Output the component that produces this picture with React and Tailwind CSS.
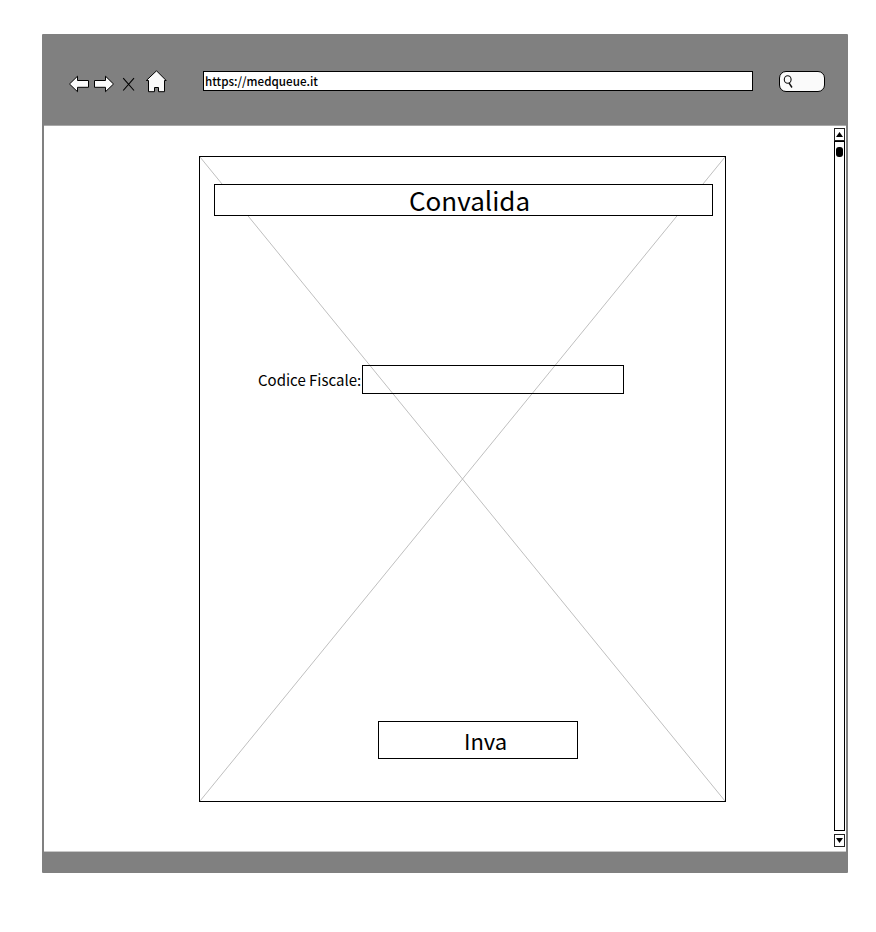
const FONT = "font-['Noto_Sans_CJK_SC','Noto_Sans',sans-serif]";

function NavIcons() {
  return (
    <svg className="ml-[26px] mt-[34px] h-[26px] w-[100px] shrink-0" viewBox="68 68 100 26" fill="#fafafa" stroke="#000" strokeWidth="1">
      <path d="M69.5 84 L77.5 76.2 V80.5 H88.5 V87.3 H77.5 V91.7 Z" />
      <path d="M113.5 84 L105.5 76.2 V80.5 H94.5 V87.3 H105.5 V91.7 Z" />
      <path d="M123.2 78.2 L134 90.5 M134 78.2 L123.2 90.5" fill="none" strokeWidth="1.1" />
      <path d="M146.3 80.5 L156.5 70.8 L166.2 80.5 H164.5 V91.7 H158.5 V87.5 H154.5 V91.7 H148.5 V80.5 Z" />
    </svg>
  );
}

function Toolbar() {
  return (
    <header className="flex h-[91px] shrink-0 items-start">
      <NavIcons />
      <div className="ml-[35px] mt-[37px] flex h-5 w-[550px] shrink-0 items-center border border-black bg-white pl-[1px]">
        <span className="origin-left scale-x-[0.97] whitespace-nowrap text-[12px] leading-[18px] font-medium">https://medqueue.it</span>
      </div>
      <div className="ml-[26px] mt-[37px] h-[21px] w-[46px] shrink-0 rounded-[7px] border border-black bg-[#fafafa]">
        <svg className="h-[19px] w-[20px]" viewBox="780 72 20 19" fill="none" stroke="#111" strokeWidth="1.1">
          <ellipse cx="787.7" cy="79.5" rx="3.4" ry="3.8" />
          <path d="M789 83 L792 87.5" strokeWidth="1.4" />
        </svg>
      </div>
    </header>
  );
}

function Scrollbar() {
  return (
    <div className="mr-px flex w-[11px] shrink-0 flex-col pt-[2px]">
      <div className="flex h-[13px] items-center justify-center border border-[#222] bg-white">
        <svg className="h-[5px] w-[7px]" viewBox="0 0 7 5"><path d="M3.5 0 L7 5 H0 Z" /></svg>
      </div>
      <div className="flex h-[690px] justify-center border border-black bg-white pt-[5px]">
        <div className="h-[10px] w-[7px] shrink-0 rounded-[3px] bg-black" />
      </div>
      <div className="mt-[3px] flex h-[13px] items-center justify-center border border-[#222] bg-white">
        <svg className="h-[5px] w-[7px]" viewBox="0 0 7 5"><path d="M0 0 H7 L3.5 5 Z" /></svg>
      </div>
    </div>
  );
}

function Panel() {
  return (
    <section className="relative ml-[155px] mt-[30px] flex h-[646px] w-[527px] shrink-0 flex-col border border-black">
      <svg className="absolute inset-0 h-full w-full" viewBox="0 0 525 644" stroke="#b8b8b8" strokeWidth="0.9">
        <path d="M0 0 L525 644 M525 0 L0 644" />
      </svg>
      <h1 className="relative ml-[14px] mt-[27px] flex h-8 w-[499px] shrink-0 items-center border border-black bg-white pl-[194px] text-[26px] leading-[30px] font-normal">
        <span>Convalida</span>
      </h1>
      <div className="relative mt-[149px] flex h-[29px] shrink-0 items-center">
        <label className="ml-[58px] w-[104px] whitespace-nowrap text-[15px] leading-[29px]" htmlFor="cf">
          <span>Codice Fiscale:</span>
        </label>
        <input id="cf" className="h-[29px] w-[262px] border border-black bg-transparent outline-none" />
      </div>
      <button className="relative ml-[178px] mt-[327px] flex h-[38px] w-[200px] shrink-0 items-center border border-black bg-white pl-[85px] text-[22px] leading-[36px]">
        <span>Inva</span>
      </button>
    </section>
  );
}

export default function App() {
  return (
    <div className={`h-[932px] w-[876px] bg-white pl-[42px] pt-[34px] text-black ${FONT}`}>
      <div className="flex h-[839px] w-[806px] flex-col rounded-[1px] bg-[#808080]">
        <Toolbar />
        <main className="mx-[2px] flex h-[727px] shrink-0 items-start border-y border-t-[#a8a8a8] border-b-[#c8c8c8] bg-white">
          <Panel />
          <div className="flex-1" />
          <Scrollbar />
        </main>
      </div>
    </div>
  );
}
